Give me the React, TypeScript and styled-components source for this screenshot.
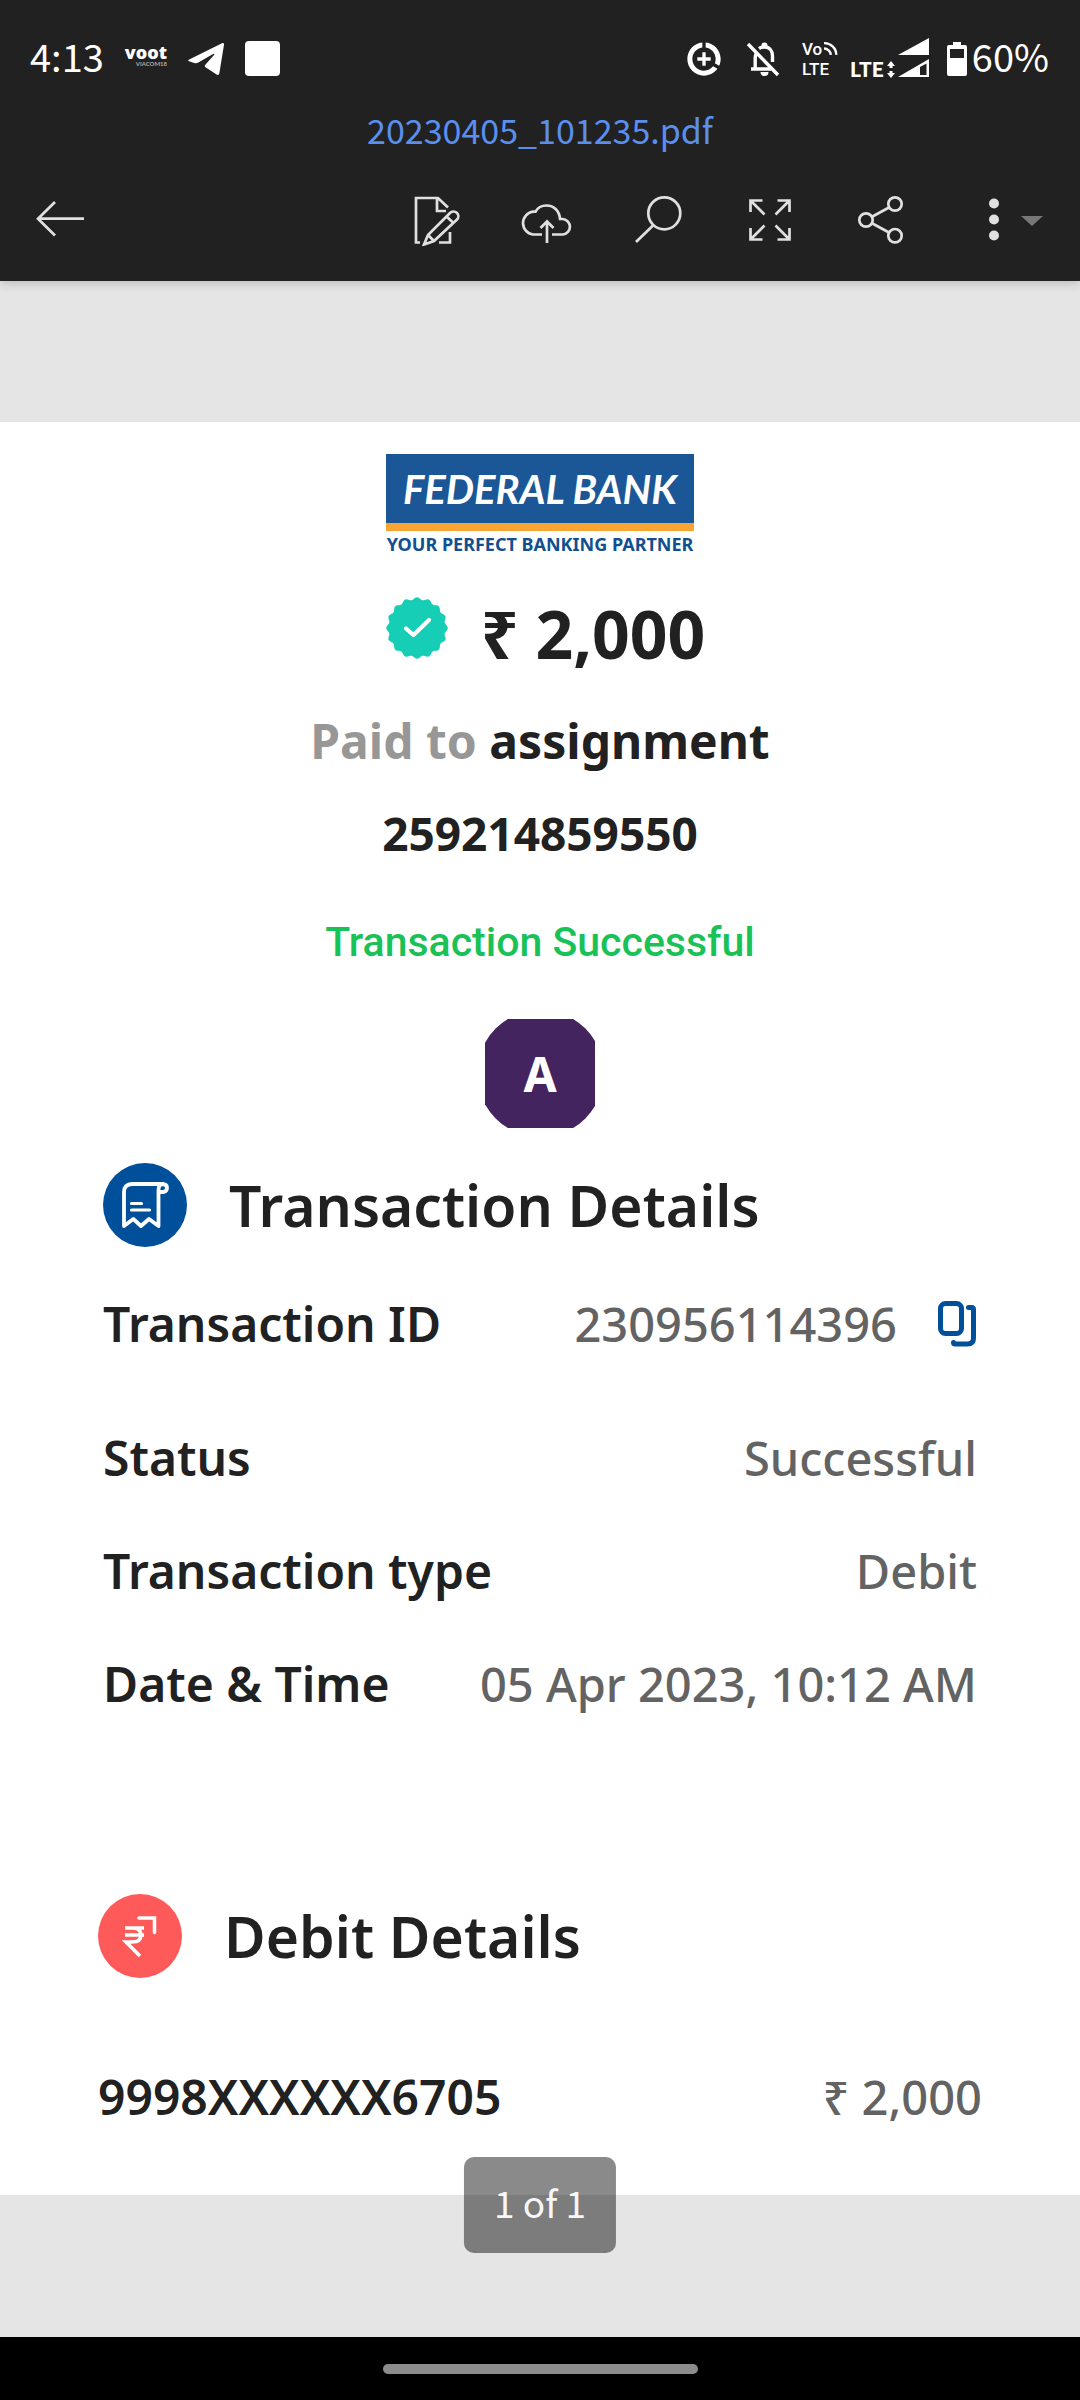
import React from 'react';
import styled, { createGlobalStyle } from 'styled-components';

const GlobalStyle = createGlobalStyle`
  * { box-sizing: border-box; }
  body { margin: 0; background: #000; }
`;

const uiFont = `'Noto Sans CJK JP', 'Noto Sans', sans-serif`;
const docFont = `'Noto Sans', sans-serif`;

const Screen = styled.div`
  display: flex;
  flex-direction: column;
  min-height: 100vh;
  font-family: ${docFont};
`;

const Header = styled.header`
  position: relative;
  z-index: 1;
  background: #212121;
  box-shadow: 0 2px 10px rgba(0, 0, 0, 0.2);
  font-family: ${uiFont};
`;

const StatusBar = styled.div`
  display: flex;
  justify-content: space-between;
  align-items: center;
  height: 103px;
  padding: 8px 31px 0 30px;
  color: #fff;
  font-size: 38px;
  line-height: 56px;
`;

const StatusGroup = styled.div<{ $gap: number }>`
  display: flex;
  align-items: center;
  gap: ${(p) => p.$gap}px;
`;

const StatusIcon = styled.svg`
  display: block;
  flex: none;
  margin-top: 6px;
`;

const VootMark = styled.span`
  display: flex;
  flex-direction: column;
  align-items: flex-end;
  font: 800 18px/16px 'Open Sans', sans-serif;
  color: #fff;
`;

const VootTag = styled.small`
  font: 700 6px/8px Lato, sans-serif;
  color: #aaa;
`;

const VolteMark = styled.span`
  display: flex;
  flex-direction: column;
  width: 36px;
  margin-top: 6px;
  font: 500 17px/20px Roboto, sans-serif;
`;

const VoLine = styled.span`
  display: flex;
  gap: 1px;
`;

const LteSignal = styled.span`
  display: flex;
  align-items: flex-end;
  gap: 3px;
  margin: 4px 5px 0 0;
  font: 900 21px/19px Lato, sans-serif;
`;

const Battery = styled.span`
  display: flex;
  align-items: center;
  gap: 5px;
`;

const FileName = styled.h1`
  margin: 0;
  color: #5a8fee;
  font-size: 34px;
  font-weight: 400;
  line-height: 54px;
  text-align: center;
`;

const Toolbar = styled.nav`
  display: flex;
  align-items: center;
  height: 124px;
  padding: 0 30px 0 10px;
`;

const Spacer = styled.span`
  flex: 1;
`;

const ToolButton = styled.button<{ $end?: boolean }>`
  display: flex;
  align-items: center;
  justify-content: ${(p) => (p.$end ? 'flex-end' : 'center')};
  flex: none;
  width: ${(p) => (p.$end ? 114 : 111)}px;
  height: 100px;
  padding: 0;
  border: 0;
  background: none;
  color: #e0e0e0;
  &:first-child { width: 100px; }
`;

const Viewer = styled.main`
  position: relative;
  flex: 1;
  padding: 141px 0 142px;
  background: #e5e5e5;
  z-index: 0;
`;

const Sheet = styled.article`
  display: flex;
  flex-direction: column;
  background: #fff;
  padding: 32px 0 66px;
  color: #212121;
`;

const Summary = styled.section`
  display: flex;
  flex-direction: column;
  align-items: center;
`;

const BankLogo = styled.div`
  display: flex;
  flex-direction: column;
  width: 308px;
`;

const BankName = styled.div`
  padding-top: 2px;
  border-bottom: 8px solid #f9a533;
  background: #1b5697;
  color: #fff;
  font: italic 700 40px/67px Lato, sans-serif;
  text-align: center;
`;

const BankTagline = styled.div`
  color: #124f90;
  font-size: 18px;
  font-weight: 700;
  line-height: 26px;
  text-align: center;
  white-space: nowrap;
`;

const Amount = styled.div`
  display: flex;
  gap: 33px;
  margin-top: 40px;
  padding-left: 11px;
  font-size: 66px;
  font-weight: 700;
  line-height: 72px;
`;

const Payee = styled.p`
  margin: 40px 0 0;
  font-size: 48px;
  font-weight: 700;
  line-height: 64px;
`;

const Muted = styled.span`
  color: #979797;
`;

const PayeeNumber = styled.p`
  margin: 28px 0 0;
  font-size: 46px;
  font-weight: 700;
  line-height: 64px;
`;

const Outcome = styled.p`
  margin: 45px 0 0;
  color: #19c257;
  font-family: Roboto, sans-serif;
  font-size: 41px;
  font-weight: 500;
  line-height: 64px;
`;

const Avatar = styled.div`
  display: flex;
  align-items: center;
  justify-content: center;
  width: 110px;
  height: 109px;
  margin-top: 45px;
  overflow: hidden;
`;

const AvatarDisc = styled.span`
  flex: none;
  width: 127px;
  height: 127px;
  border-radius: 50%;
  background: #43245f;
  color: #fff;
  font-size: 48px;
  font-weight: 700;
  line-height: 127px;
  text-align: center;
`;

const Section = styled.section<{ $inset: number; $top: number }>`
  margin-top: ${(p) => p.$top}px;
  padding: 0 ${(p) => p.$inset}px;
`;

const SectionTitle = styled.h2`
  display: flex;
  align-items: center;
  gap: 42px;
  margin: 0;
  font-size: 57px;
  font-weight: 600;
  line-height: 84px;
`;

const Rows = styled.dl<{ $top: number }>`
  display: flex;
  flex-direction: column;
  gap: 49px;
  margin: ${(p) => p.$top}px 0 0;
`;

const Row = styled.div<{ $loose?: boolean }>`
  display: flex;
  justify-content: space-between;
  line-height: 64px;
  margin-bottom: ${(p) => (p.$loose ? 21 : 0)}px;
`;

const Term = styled.dt`
  font-size: 48px;
  font-weight: 600;
`;

const Value = styled.dd`
  display: flex;
  align-items: center;
  gap: 41px;
  margin: 0;
  color: #636363;
  font-size: 47px;
  font-weight: 500;
`;

const CopyButton = styled.button`
  display: flex;
  padding: 0;
  border: 0;
  background: none;
`;

const PageCounter = styled.output`
  position: absolute;
  left: 50%;
  bottom: 84px;
  transform: translateX(-50%);
  padding: 0 30px 6px;
  border-radius: 10px;
  background: rgba(0, 0, 0, 0.46);
  color: #f7f7f7;
  font-family: ${uiFont};
  font-size: 37px;
  line-height: 90px;
  white-space: nowrap;
`;

const HomeBar = styled.footer`
  display: flex;
  justify-content: center;
  align-items: center;
  height: 63px;
  background: #000;
`;

const HomeHandle = styled.span`
  width: 315px;
  height: 10px;
  border-radius: 5px;
  background: #8c8c8c;
`;

function ToolIcon({ children, width = 54 }: { children: React.ReactNode; width?: number }) {
  return (
    <svg width={width} height="54" viewBox={`0 0 ${width} 54`} fill="none" stroke="currentColor" strokeWidth="2.7" aria-hidden="true">
      {children}
    </svg>
  );
}

function VerifiedBadge() {
  const points = Array.from({ length: 160 }, (_, i) => {
    const a = (i / 160) * Math.PI * 2 - Math.PI / 2;
    const r = 29.5 + 1.3 * Math.cos(16 * (a + Math.PI / 2));
    return `${(31 + r * Math.cos(a)).toFixed(2)},${(31 + r * Math.sin(a)).toFixed(2)}`;
  }).join(' ');
  return (
    <svg width="62" height="62" viewBox="0 0 62 62" aria-label="Verified" role="img">
      <polygon points={points} fill="#16cdb6" />
      <path d="M20 31.5l7.5 6.5L43 23" fill="none" stroke="#fff" strokeWidth="4.2" strokeLinecap="round" strokeLinejoin="round" />
    </svg>
  );
}

const details = [
  { term: 'Status', value: 'Successful' },
  { term: 'Transaction type', value: 'Debit' },
  { term: 'Date & Time', value: '05 Apr 2023, 10:12 AM' },
];

export default function App() {
  return (
    <Screen>
      <GlobalStyle />
      <Header>
        <StatusBar>
          <StatusGroup $gap={21}>
            <span>4:13</span>
            <VootMark>
              voot
              <VootTag>VIACOM18</VootTag>
            </VootMark>
            <StatusIcon width="36" height="34" viewBox="0 0 36 34" fill="#fff">
              <path d="M1.2 17.5L34 1.2c1.4-.6 2.2.1 2 1.5L31.4 31c-.3 2-1.5 2.3-2.8 1.5L17.5 25.3c-1-.7-1-1.6-.2-2.5L26 13c.8-1.2.2-1.7-.9-1L10.3 20.5c-1.6 1-2.5 1-4.2.4L1.2 19.3c-1.3-.4-1.4-1.2 0-1.8z" />
            </StatusIcon>
            <StatusIcon width="36" height="36" viewBox="0 0 36 36" fill="#fff">
              <rect width="35" height="35" rx="4" />
            </StatusIcon>
          </StatusGroup>
          <StatusGroup $gap={12}>
            <StatusIcon width="48" height="40" viewBox="0 0 28.8 24" fill="#fff">
              <path d="M11 8v3H8v2h3v3h2v-3h3v-2h-3V8h-2zm2-5.95v3.03c3.39.49 6 3.39 6 6.92 0 .9-.18 1.75-.48 2.54l2.6 1.53c.56-1.24.88-2.62.88-4.07 0-5.18-3.95-9.45-9-9.95zM12 19c-3.87 0-7-3.13-7-7 0-3.53 2.61-6.43 6-6.92V2.05c-5.06.5-9 4.76-9 9.95 0 5.52 4.47 10 9.99 10 3.31 0 6.24-1.61 8.06-4.09l-2.6-1.53C16.17 17.98 14.21 19 12 19z" />
            </StatusIcon>
            <StatusIcon width="46" height="36" viewBox="0 0 46 36" fill="none" stroke="#fff" strokeWidth="3.4">
              <path d="M4 3l30 31M12 13c-.6 1.5-.8 3-.8 5v9.500M7 28h22M15 7.500c1.500-1 3.500-1.500 5.500-1.500 5 0 8 4 8 9v6" />
              <path d="M17.500 6V4.500a3 3 0 0 1 6 0V6zM16.500 31h8a4 4 0 0 1-8 0z" fill="#fff" stroke="none" />
            </StatusIcon>
            <VolteMark>
              <VoLine>
                Vo
                <svg width="15" height="17" viewBox="0 0 15 17" fill="none" stroke="#fff" strokeWidth="2.4">
                  <path d="M1 4a12 12 0 0 1 12.500 12M1 9.500a7 7 0 0 1 7 6.500" />
                </svg>
              </VoLine>
              <span>LTE</span>
            </VolteMark>
            <LteSignal>
              LTE
              <svg width="8" height="17" viewBox="0 0 8 17" fill="#fff">
                <path d="M4 0l4 5H5.500v2h-3V5H0zM4 17l4-5H5.500v-2h-3v2H0z" />
              </svg>
              <svg width="32" height="40" viewBox="0 0 32 40">
                <path d="M31 0v17H0z" fill="#fff" />
                <path d="M31 21v18H0z" fill="#fff" />
                <path d="M22 29l6.500-3.500V37H22z" fill="#212121" />
              </svg>
            </LteSignal>
            <Battery>
              <StatusIcon width="20" height="34" viewBox="0 0 20 34">
                <path d="M6 0h8v3h4a2 2 0 0 1 2 2v27a2 2 0 0 1-2 2H2a2 2 0 0 1-2-2V5a2 2 0 0 1 2-2h4z" fill="#fff" />
                <path d="M3 7h14v9H3z" fill="#212121" />
              </StatusIcon>
              60%
            </Battery>
          </StatusGroup>
        </StatusBar>
        <FileName>20230405_101235.pdf</FileName>
        <Toolbar aria-label="Document">
          <ToolButton aria-label="Back">
            <ToolIcon>
              <path d="M51 26.700H5M22 10L5 26.700 22 43.500" />
            </ToolIcon>
          </ToolButton>
          <Spacer />
          <ToolButton aria-label="Edit">
            <ToolIcon>
              <path d="M10 50.500H6V6h22l10 9.500M27 6v13h9M40 40v10.500H29" />
              <path d="M14 52.500l4-9.500L40 21a4.700 4.700 0 0 1 7 6.600L24 49z M18 43l6 6M36.500 24.500l7 6.500" />
            </ToolIcon>
          </ToolButton>
          <ToolButton aria-label="Upload">
            <ToolIcon>
              <path d="M21 42.500H12A11.500 11.500 0 0 1 12 19.700h2.500C16.500 16 20 13.500 25.500 13.500 33 13.500 38.500 19 39 27h3a7.800 7.800 0 0 1 0 15.500H31M26 51V30M19.500 36l6.500-6.500 6.500 6.500" />
            </ToolIcon>
          </ToolButton>
          <ToolButton aria-label="Search">
            <ToolIcon>
              <circle cx="32.300" cy="21.300" r="16" />
              <path d="M21.500 33L4 50" />
            </ToolIcon>
          </ToolButton>
          <ToolButton aria-label="Full screen">
            <ToolIcon>
              <path d="M19.500 8.500H7.500V20M7.500 8.500L21.500 22.500M34.500 8.500H46.500V20M46.500 8.500L32.500 22.500M19.500 47.500H7.500V36M7.500 47.500L21.500 33.500M34.500 47.500H46.500V36M46.500 47.500L32.500 33.500" />
            </ToolIcon>
          </ToolButton>
          <ToolButton aria-label="Share">
            <ToolIcon>
              <circle cx="12" cy="28" r="6.700" />
              <circle cx="41" cy="12" r="6.700" />
              <circle cx="41" cy="43.700" r="6.700" />
              <path d="M18 24.800l17-9.300M18 31.200l17 9.300" />
            </ToolIcon>
          </ToolButton>
          <ToolButton aria-label="More options" $end>
            <ToolIcon width={62}>
              <g fill="currentColor" stroke="none">
                <circle cx="6" cy="11.500" r="5" />
                <circle cx="6" cy="27.500" r="5" />
                <circle cx="6" cy="43.500" r="5" />
                <path d="M33 24h22L44 34z" fill="#777" />
              </g>
            </ToolIcon>
          </ToolButton>
        </Toolbar>
      </Header>

      <Viewer>
        <Sheet>
          <Summary>
            <BankLogo>
              <BankName>FEDERAL BANK</BankName>
              <BankTagline>YOUR PERFECT BANKING PARTNER</BankTagline>
            </BankLogo>
            <Amount>
              <VerifiedBadge />
              <span>₹ 2,000</span>
            </Amount>
            <Payee>
              <Muted>Paid to</Muted> assignment
            </Payee>
            <PayeeNumber>259214859550</PayeeNumber>
            <Outcome>Transaction Successful</Outcome>
            <Avatar>
              <AvatarDisc>A</AvatarDisc>
            </Avatar>
          </Summary>

          <Section $inset={103} $top={35}>
            <SectionTitle>
              <svg width="84" height="84" viewBox="0 0 84 84" fill="none" stroke="#fff" strokeWidth="3.8" strokeLinejoin="round" strokeLinecap="round" aria-hidden="true">
                <circle cx="42" cy="42" r="42" fill="#004f9b" stroke="none" />
                <path d="M60 21H29q-8 0-8 8v34l9.300-7 7.700 7 8-7 9.500 7V27q0-6 4.500-6 4 .5 4 4t-4 4h-4" />
                <path d="M28.500 40.500h10M28.500 47h18" strokeWidth="3.2" />
              </svg>
              Transaction Details
            </SectionTitle>
            <Rows $top={45}>
              <Row $loose>
                <Term>Transaction ID</Term>
                <Value>
                  230956114396
                  <CopyButton aria-label="Copy transaction ID">
                    <svg width="39" height="46" viewBox="0 0 39 46" fill="none" stroke="#004f9b" strokeWidth="5" strokeLinecap="round">
                      <rect x="2.500" y="2.500" width="21" height="30" rx="5" />
                      <path d="M30.500 6.500h3q2 0 2 2V37q0 6-6 6H17q-1.500 0-1.500-1.500" />
                    </svg>
                  </CopyButton>
                </Value>
              </Row>
              {details.map((d) => (
                <Row key={d.term}>
                  <Term>{d.term}</Term>
                  <Value>{d.value}</Value>
                </Row>
              ))}
            </Rows>
          </Section>

          <Section $inset={98} $top={178}>
            <SectionTitle>
              <svg width="84" height="84" viewBox="0 0 84 84" fill="none" stroke="#fff" strokeWidth="3.5" aria-hidden="true">
                <circle cx="42" cy="42" r="42" fill="#ff5a5a" stroke="none" />
                <path d="M27 34h19M27 41h19M30 34h4q9 0 9 7t-9 7h-6l14 14" />
                <path d="M41 24h15.500v14.500" strokeLinecap="round" />
              </svg>
              Debit Details
            </SectionTitle>
            <Rows $top={87}>
              <Row>
                <Term>9998XXXXXX6705</Term>
                <Value>₹ 2,000</Value>
              </Row>
            </Rows>
          </Section>
        </Sheet>
        <PageCounter>1 of 1</PageCounter>
      </Viewer>

      <HomeBar>
        <HomeHandle />
      </HomeBar>
    </Screen>
  );
}
